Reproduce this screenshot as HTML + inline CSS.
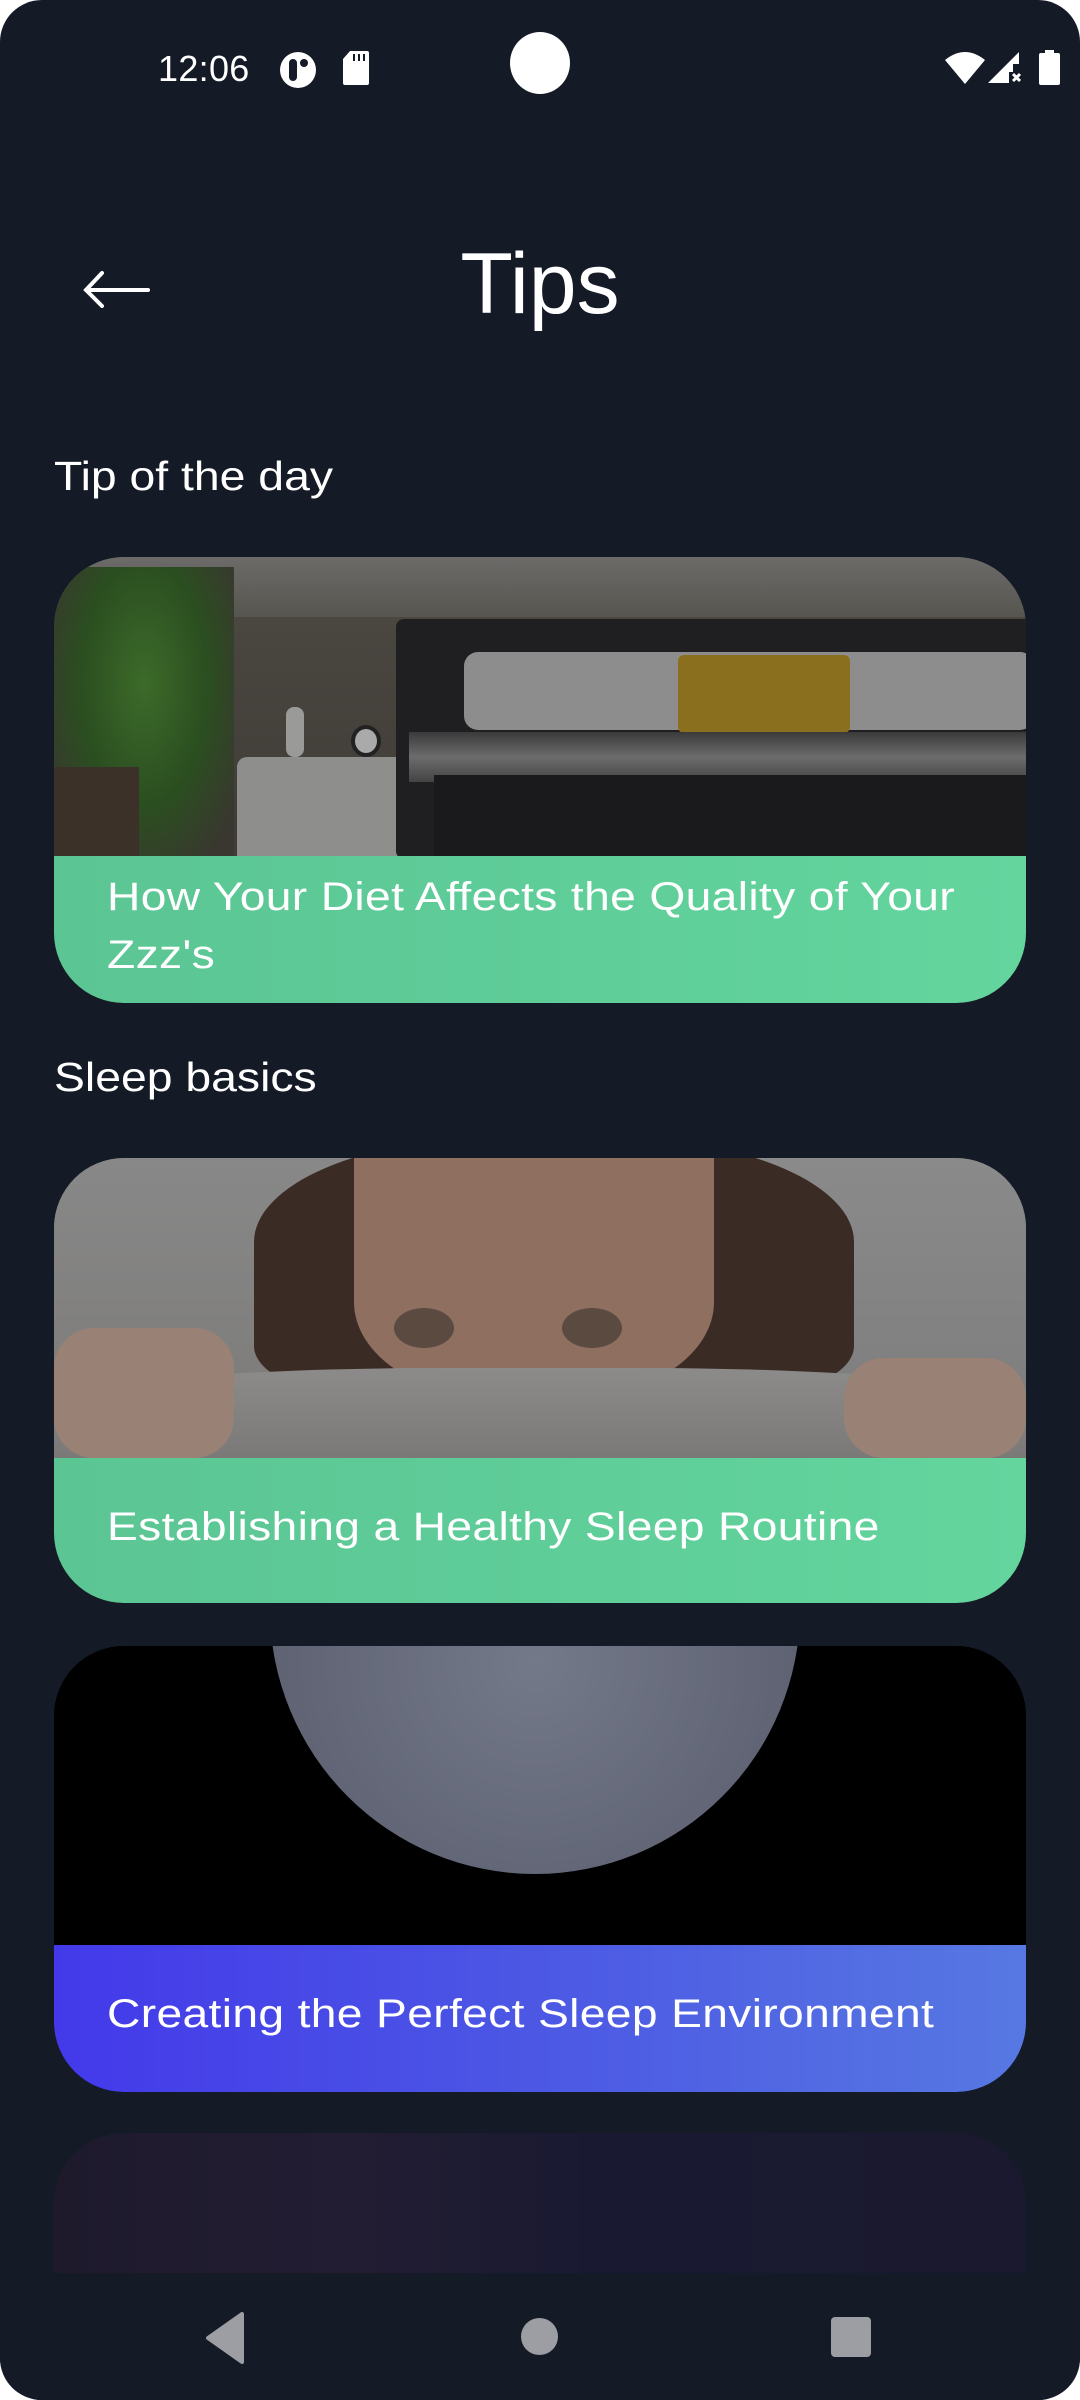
<!DOCTYPE html>
<html><head><meta charset="utf-8"><style>
*{margin:0;padding:0;box-sizing:border-box}
html,body{width:1080px;height:2400px;background:#fff;overflow:hidden}
#scr{position:absolute;left:0;top:0;width:1080px;height:2400px;background:#141a26;border-radius:42px;overflow:hidden;font-family:"Liberation Sans",sans-serif;color:#fff}
.abs{position:absolute}
.card{position:absolute;left:54px;width:972px;border-radius:70px;overflow:hidden}
.img{position:absolute;left:0;top:0;width:972px}
.band{position:absolute;left:0;width:972px}
.band span{position:absolute;left:53px;font-size:40px;color:#fff;white-space:nowrap;letter-spacing:0.3px;transform:scaleX(1.155);transform-origin:0 0}
.green{background:linear-gradient(90deg,#5bc594,#63d59d)}
.h2{position:absolute;left:54px;font-size:41px;color:#fff;transform:scaleX(1.13);transform-origin:0 0}
</style></head><body>
<div id="scr">
<!-- status bar -->
<div class="abs" style="left:158px;top:48px;font-size:36px;letter-spacing:0.3px">12:06</div>
<svg class="abs" style="left:278px;top:50px" width="42" height="40" viewBox="0 0 42 40"><circle cx="20" cy="20" r="18" fill="#fff"/><rect x="11" y="9" width="8" height="22" rx="4" fill="#141a26"/><circle cx="26" cy="13" r="4" fill="#141a26"/></svg>
<svg class="abs" style="left:342px;top:51px" width="28" height="34" viewBox="0 0 28 34"><path d="M8 0H25a2 2 0 0 1 2 2V32a2 2 0 0 1-2 2H3a2 2 0 0 1-2-2V8Z" fill="#fff"/><rect x="11" y="3" width="2" height="7" fill="#141a26"/><rect x="16" y="3" width="2" height="7" fill="#141a26"/><rect x="21" y="3" width="2" height="7" fill="#141a26"/></svg>
<div class="abs" style="left:510px;top:32px;width:60px;height:62px;border-radius:50%;background:#fff"></div>
<svg class="abs" style="left:944px;top:50px" width="42" height="35" viewBox="0 0 42 35"><path d="M1 10Q21 -6 41 10L21 34Z" fill="#fff"/></svg>
<svg class="abs" style="left:986px;top:50px" width="36" height="35" viewBox="0 0 36 35"><path d="M33 2V14H27V22H23V33H2Z" fill="#fff"/><path d="M27 24l7 7M34 24l-7 7" stroke="#fff" stroke-width="3"/></svg>
<svg class="abs" style="left:1038px;top:50px" width="24" height="36" viewBox="0 0 24 36"><rect x="7" y="0" width="9" height="4" fill="#fff"/><rect x="1" y="3" width="21" height="32" rx="2" fill="#fff"/></svg>

<!-- header -->
<svg class="abs" style="left:82px;top:268px" width="70" height="40" viewBox="0 0 70 40"><path d="M66 22H4M20 5L4 22L20 38" stroke="#fff" stroke-width="4" fill="none" stroke-linecap="round"/></svg>
<div class="abs" style="left:0;width:1080px;text-align:center;top:235px;font-size:86px">Tips</div>

<div class="h2" style="top:453px">Tip of the day</div>

<!-- card 1 -->
<div class="card" style="top:557px;height:446px">
 <div class="img" style="height:299px;background:linear-gradient(180deg,#5a5956 0%,#4a4741 20%,#3f3b36 100%)">
  <div class="abs" style="left:0;top:0;width:972px;height:60px;background:linear-gradient(180deg,#6c6b69,#57554f)"></div>
  <div class="abs" style="left:0;top:10px;width:180px;height:290px;background:radial-gradient(ellipse at 50% 40%,#3c6b2a 0%,#2b4e20 50%,#3a3630 90%)"></div>
  <div class="abs" style="left:0;top:210px;width:85px;height:90px;background:#3b3129"></div>
  <div class="abs" style="left:183px;top:200px;width:170px;height:100px;background:#8e8e8c;border-radius:10px 10px 0 0"></div>
  <div class="abs" style="left:232px;top:150px;width:18px;height:50px;background:#9a9a98;border-radius:8px"></div>
  <div class="abs" style="left:297px;top:168px;width:30px;height:32px;border:4px solid #222;border-radius:50%;background:#aaa"></div>
  <div class="abs" style="left:342px;top:62px;width:640px;height:240px;background:#1f1f22;border-radius:8px"></div>
  <div class="abs" style="left:410px;top:95px;width:570px;height:78px;background:#8d8d8d;border-radius:14px"></div>
  <div class="abs" style="left:624px;top:98px;width:172px;height:78px;background:#8a6f1e;border-radius:6px"></div>
  <div class="abs" style="left:355px;top:175px;width:620px;height:50px;background:linear-gradient(180deg,#3a3a3a,#6c6c6c 50%,#444)"></div>
  <div class="abs" style="left:380px;top:218px;width:600px;height:82px;background:#1a1a1d"></div>
 </div>
 <div class="band green" style="top:299px;height:147px"><span style="top:12px;line-height:58px">How Your Diet Affects the Quality of Your<br>Zzz's</span></div>
</div>

<div class="h2" style="top:1054px">Sleep basics</div>

<!-- card 2 -->
<div class="card" style="top:1158px;height:445px">
 <div class="img" style="height:300px;background:#7d7c7b">
  <div class="abs" style="left:0;top:0;width:300px;height:300px;background:linear-gradient(180deg,#888,#7b7a78)"></div>
  <div class="abs" style="left:700px;top:0;width:272px;height:300px;background:linear-gradient(180deg,#8a8a8a,#7c7c7c)"></div>
  <div class="abs" style="left:200px;top:-20px;width:600px;height:260px;background:#3a2c25;border-radius:40% 40% 20% 20%"></div>
  <div class="abs" style="left:300px;top:0;width:360px;height:240px;background:#8e6f60;border-radius:0 0 40% 40%"></div>
  <div class="abs" style="left:340px;top:150px;width:60px;height:40px;background:#5a4a40;border-radius:50%"></div>
  <div class="abs" style="left:508px;top:150px;width:60px;height:40px;background:#5a4a40;border-radius:50%"></div>
  <div class="abs" style="left:0;top:210px;width:972px;height:90px;background:linear-gradient(180deg,#8c8b8a,#7a7978);border-radius:40% 40% 0 0"></div>
  <div class="abs" style="left:0;top:170px;width:180px;height:130px;background:#9a8175;border-radius:40px"></div>
  <div class="abs" style="left:790px;top:200px;width:182px;height:100px;background:#9a8175;border-radius:40px"></div>
 </div>
 <div class="band green" style="top:300px;height:145px"><span style="top:47px">Establishing a Healthy Sleep Routine</span></div>
</div>

<!-- card 3 -->
<div class="card" style="top:1646px;height:446px;background:#000">
 <div class="img" style="height:299px;background:#000;overflow:hidden">
  <div class="abs" style="left:216px;top:-302px;width:530px;height:530px;border-radius:50%;background:radial-gradient(circle at 50% 60%,#74798a,#5c6070 70%,#4a4e5c)"></div>
 </div>
 <div class="band" style="top:299px;height:147px;background:linear-gradient(90deg,#4339ea,#4c58e4 50%,#5778e2)"><span style="top:47px">Creating the Perfect Sleep Environment</span></div>
</div>

<!-- card 4 -->
<div class="card" style="top:2133px;height:300px;border-radius:70px 70px 0 0;background:linear-gradient(90deg,#1e1a2c,#231d33 30%,#191a32 55%,#1a1930)"></div>

<!-- nav bar -->
<div class="abs" style="left:0;top:2273px;width:1080px;height:127px;background:#141a26"></div>
<svg class="abs" style="left:200px;top:2310px" width="50" height="56" viewBox="0 0 50 56"><path d="M42 4V52L8 28Z" fill="#9d9ea3" stroke="#9d9ea3" stroke-width="4" stroke-linejoin="round"/></svg>
<div class="abs" style="left:521px;top:2318px;width:37px;height:37px;border-radius:50%;background:#9d9ea3"></div>
<div class="abs" style="left:831px;top:2317px;width:40px;height:40px;border-radius:4px;background:#9d9ea3"></div>
</div>
</body></html>
